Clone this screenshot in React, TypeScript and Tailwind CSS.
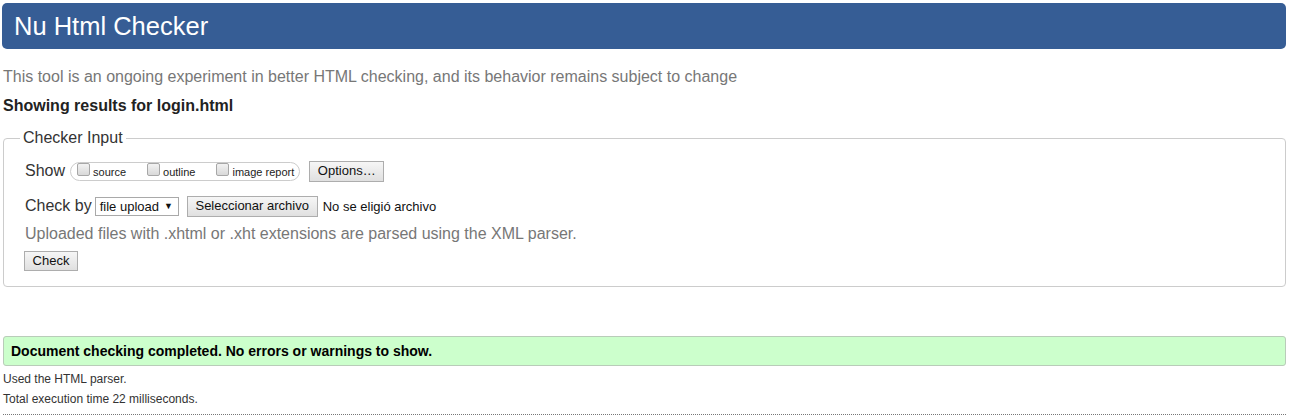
export default function App() {
  const options = ['source', 'outline', 'image report']

  return (
    <div className="w-[1290px] h-[417px] overflow-hidden bg-white font-['Liberation_Sans',Arial,sans-serif] text-[#333]">
      {/* Header */}
      <div className="mt-[3px] ml-[2px] w-[1284px] h-[46px] rounded-[5px] bg-[#365d95] flex items-center pl-[12px]">
        <h1 className="text-[25.5px] leading-[28px] text-white">Nu Html Checker</h1>
      </div>

      <p className="mt-[19px] ml-[3px] h-[18px] text-[16px] leading-[18px] text-[#777]">
        This tool is an ongoing experiment in better HTML checking, and its behavior remains subject to change
      </p>
      <p className="mt-[11px] ml-[3px] h-[18px] text-[16px] leading-[18px] font-bold text-[#222]">
        Showing results for login.html
      </p>

      {/* Checker Input */}
      <fieldset className="mt-[14px] ml-[3px] w-[1283px] border border-[#ccc] rounded-[4px] pl-[21px] pb-[15px]">
        <legend className="-ml-[5px] px-[3px] text-[16px] leading-[18px] text-[#333]">Checker Input</legend>

        <div className="mt-[12px] h-[24px] flex items-center">
          <span className="text-[16px] leading-[18px]">Show</span>
          <div className="ml-[5px] h-[19px] flex items-center border border-[#ccc] rounded-full pl-[6px] pr-[5px]">
            {options.map((o, i) => (
              <label key={o} className={`flex items-center ${i < options.length - 1 ? 'mr-[21px]' : ''}`}>
                <span className="w-[13px] h-[13px] -mt-[4px] rounded-[2px] border border-[#a7a7a7] bg-gradient-to-b from-[#f2f2f2] to-[#d9d9d9]" />
                <span className="ml-[3px] text-[11px] leading-[13px] text-[#222] pt-[2px]">{o}</span>
              </label>
            ))}
          </div>
          <button className="ml-[9px] h-[21px] w-[75px] border border-[#adadad] bg-gradient-to-b from-[#f6f6f6] to-[#e0e0e0] text-[13px] leading-[18px] text-[#111]">
            Options…
          </button>
        </div>

        <div className="mt-[11px] h-[24px] flex items-center">
          <span className="text-[16px] leading-[18px]">Check by</span>
          <div className="ml-[3px] h-[19px] w-[84px] border border-[#a9a9a9] bg-white flex items-center pl-[4px] text-[13px] leading-[15px] text-[#111]">
            <span>file upload</span>
            <span className="ml-[5px] text-[9px]">▼</span>
          </div>
          <button className="ml-[8px] h-[21px] w-[131px] border border-[#adadad] bg-gradient-to-b from-[#f6f6f6] to-[#e0e0e0] text-[13px] leading-[18px] text-[#111]">
            Seleccionar archivo
          </button>
          <span className="ml-[5px] text-[13px] leading-[15px] text-[#111]">No se eligió archivo</span>
        </div>

        <p className="mt-[7px] h-[18px] text-[16px] leading-[18px] text-[#777]">
          Uploaded files with .xhtml or .xht extensions are parsed using the XML parser.
        </p>

        <button className="mt-[8px] -ml-[1px] h-[20px] w-[54px] border border-[#adadad] bg-gradient-to-b from-[#f6f6f6] to-[#e0e0e0] text-[13px] leading-[18px] text-[#111] block">
          Check
        </button>
      </fieldset>

      {/* Result */}
      <div className="mt-[49px] ml-[3px] w-[1283px] h-[30px] border border-[#b9ccb9] rounded-[3px] bg-[#ccffcc] flex items-center pl-[7px]">
        <span className="text-[14px] leading-[16px] font-bold text-black">
          Document checking completed. No errors or warnings to show.
        </span>
      </div>
      <p className="mt-[3px] ml-[3px] h-[20px] text-[12px] leading-[20px] text-[#333]">Used the HTML parser.</p>
      <p className="ml-[3px] h-[20px] text-[12px] leading-[20px] text-[#333]">Total execution time 22 milliseconds.</p>
      <div className="mt-[5px] ml-[3px] w-[1283px] border-b border-dotted border-[#777]" />
    </div>
  )
}
